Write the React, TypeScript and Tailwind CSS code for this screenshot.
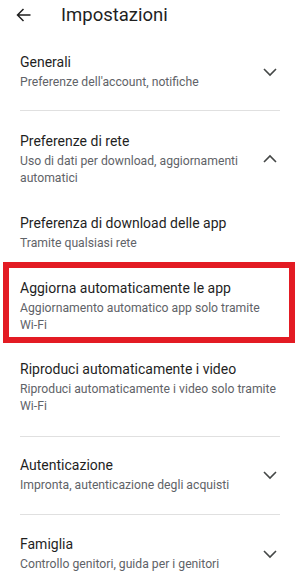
import { ReactNode } from "react";

function Chevron({ up = false }: { up?: boolean }) {
  return (
    <svg width="24" height="24" viewBox="0 0 24 24" className="shrink-0">
      <path
        d={up ? "M6 15 L12 9 L18 15" : "M6 9 L12 15 L18 9"}
        fill="none"
        stroke="#444746"
        strokeWidth="1.6"
      />
    </svg>
  );
}

function Item({
  title,
  subtitle,
  chevron,
  className = "",
}: {
  title: string;
  subtitle: ReactNode;
  chevron?: "up" | "down";
  className?: string;
}) {
  return (
    <div className={`flex items-center ${className}`}>
      <div className="flex-1 min-w-0">
        <div className="text-[14px] leading-[20px] text-[#1f1f1f]">{title}</div>
        <div className="mt-[2px] text-[12.2px] leading-[17px] text-[#5f6368]">{subtitle}</div>
      </div>
      {chevron && (
        <div className="-mr-[2px]">
          <Chevron up={chevron === "up"} />
        </div>
      )}
    </div>
  );
}

export default function App() {
  return (
    <div
      className="w-[300px] h-[581px] overflow-hidden bg-white"
      style={{ fontFamily: "Roboto, 'Noto Sans', sans-serif" }}
    >
      {/* Header */}
      <div className="flex items-center h-[30px]">
        <div className="w-[61px] flex items-center pl-[14px]">
          <svg width="20" height="20" viewBox="0 0 20 20">
            <path
              d="M16.5 10 H3.5 M9.5 4 L3.5 10 L9.5 16"
              fill="none"
              stroke="#1f1f1f"
              strokeWidth="1.5"
            />
          </svg>
        </div>
        <h1 className="text-[18.5px] leading-[28px] text-[#1f1f1f]">Impostazioni</h1>
      </div>

      {/* Generali */}
      <Item
        className="px-5 pt-[22px] pb-[19px]"
        title="Generali"
        subtitle="Preferenze dell'account, notifiche"
        chevron="down"
      />
      <div className="mx-5 border-t border-[#e0e0e0]" />

      {/* Preferenze di rete */}
      <Item
        className="px-5 pt-5"
        title="Preferenze di rete"
        subtitle="Uso di dati per download, aggiornamenti automatici"
        chevron="up"
      />
      <Item
        className="px-5 pt-[26px]"
        title="Preferenza di download delle app"
        subtitle="Tramite qualsiasi rete"
      />
      <div className="mx-[3px] mt-[10px] w-[292px] border-[6px] border-[#e31b23] pl-[11px] pr-4 pt-[10px] pb-[3px]">
        <Item
          title="Aggiorna automaticamente le app"
          subtitle="Aggiornamento automatico app solo tramite Wi-Fi"
        />
      </div>
      <Item
        className="pl-5 pr-4 pt-[16px] pb-[21px]"
        title="Riproduci automaticamente i video"
        subtitle="Riproduci automaticamente i video solo tramite Wi-Fi"
      />
      <div className="mx-5 border-t border-[#e0e0e0]" />

      {/* Autenticazione */}
      <Item
        className="px-5 pt-[18px] pb-5"
        title="Autenticazione"
        subtitle="Impronta, autenticazione degli acquisti"
        chevron="down"
      />
      <div className="mx-5 border-t border-[#e0e0e0]" />

      {/* Famiglia */}
      <Item
        className="px-5 pt-[19px]"
        title="Famiglia"
        subtitle="Controllo genitori, guida per i genitori"
        chevron="down"
      />
    </div>
  );
}
